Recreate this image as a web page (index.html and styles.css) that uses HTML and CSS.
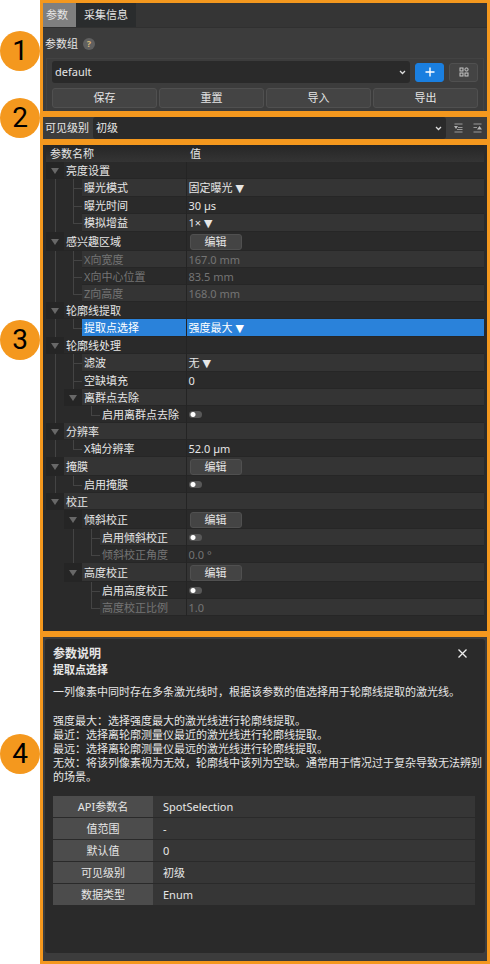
FILE: index.html
```html
<!DOCTYPE html>
<html lang="zh-CN">
<head>
    <meta charset="UTF-8">
    <meta name="viewport" content="width=device-width, initial-scale=1.0">
    <title>参数</title>
    <link rel="stylesheet" href="styles.css">
</head>
<body>
    <section class="frame frame-group">
        <span class="badge">1</span>
        <div class="tabs">
            <button class="tab active">参数</button>
            <button class="tab">采集信息</button>
        </div>
        <div class="group-title">
            <label for="group">参数组</label>
            <span class="help">?</span>
        </div>
        <div class="group-box">
            <div class="group-row">
                <select id="group" class="select">
                    <option>default</option>
                </select>
                <button class="btn icon-btn primary" aria-label="新增">
                    <svg width="10" height="10" viewBox="0 0 10 10"><path d="M5 0.5v9M0.5 5h9" stroke="#fff" stroke-width="1.4"/></svg>
                </button>
                <button class="btn icon-btn" aria-label="管理">
                    <svg width="10" height="10" viewBox="0 0 10 10" fill="none" stroke="#c8c8c8">
                        <rect x="1" y="1" width="3" height="3"/>
                        <rect x="6" y="1" width="3" height="3" rx="1"/>
                        <rect x="1" y="6" width="3" height="3"/>
                        <rect x="6" y="6" width="3" height="3"/>
                    </svg>
                </button>
            </div>
            <div class="group-actions">
                <button class="btn">保存</button>
                <button class="btn">重置</button>
                <button class="btn">导入</button>
                <button class="btn">导出</button>
            </div>
        </div>
    </section>

    <section class="frame frame-level">
        <span class="badge">2</span>
        <div class="level-row">
            <label for="level">可见级别</label>
            <select id="level" class="select">
                <option>初级</option>
            </select>
            <button class="tool-btn" aria-label="全部展开">
                <svg width="9" height="10" viewBox="0 0 9 10"><path d="M0.5 1h8M4 4.5h4.5M3 6.5h5.5M0.5 9h8" stroke="#9a9a9a"/><path d="M0 3h4L2 6z" fill="#b4b4b4"/></svg>
            </button>
            <button class="tool-btn" aria-label="全部折叠">
                <svg width="9" height="10" viewBox="0 0 9 10"><path d="M0.5 1h8M0.5 4.5h3.5M0.5 9h8" stroke="#9a9a9a"/><path d="M4 6.5h5L6.500 3z" fill="#b4b4b4"/></svg>
            </button>
        </div>
    </section>

    <section class="frame frame-tree">
        <span class="badge">3</span>
        <table class="tree">
            <thead>
                <tr><th class="col-name">参数名称</th><th>值</th></tr>
            </thead>
            <tbody>
                <tr>
                    <td><div class="name"><i class="arrow"></i><span>亮度设置</span></div></td>
                    <td></td>
                </tr>
                <tr class="option-row">
                    <td><div class="name"><i class="line"></i><i class="branch"></i><span>曝光模式</span></div></td>
                    <td>固定曝光 <span class="caret">▼</span></td>
                </tr>
                <tr>
                    <td><div class="name"><i class="line"></i><i class="branch"></i><span>曝光时间</span></div></td>
                    <td>30 µs</td>
                </tr>
                <tr class="option-row">
                    <td><div class="name"><i class="line"></i><i class="branch last"></i><span>模拟增益</span></div></td>
                    <td>1× <span class="caret">▼</span></td>
                </tr>
                <tr class="edit-row">
                    <td><div class="name"><i class="arrow"></i><span>感兴趣区域</span></div></td>
                    <td><button class="btn edit">编辑</button></td>
                </tr>
                <tr class="disabled">
                    <td><div class="name"><i class="line"></i><i class="branch"></i><span>X向宽度</span></div></td>
                    <td>167.0 mm</td>
                </tr>
                <tr class="disabled">
                    <td><div class="name"><i class="line"></i><i class="branch"></i><span>X向中心位置</span></div></td>
                    <td>83.5 mm</td>
                </tr>
                <tr class="disabled">
                    <td><div class="name"><i class="line"></i><i class="branch last"></i><span>Z向高度</span></div></td>
                    <td>168.0 mm</td>
                </tr>
                <tr>
                    <td><div class="name"><i class="arrow"></i><span>轮廓线提取</span></div></td>
                    <td></td>
                </tr>
                <tr class="option-row selected">
                    <td><div class="name"><i class="line"></i><i class="branch last"></i><span>提取点选择</span></div></td>
                    <td>强度最大 <span class="caret">▼</span></td>
                </tr>
                <tr>
                    <td><div class="name"><i class="arrow"></i><span>轮廓线处理</span></div></td>
                    <td></td>
                </tr>
                <tr class="option-row">
                    <td><div class="name"><i class="line"></i><i class="branch"></i><span>滤波</span></div></td>
                    <td>无 <span class="caret">▼</span></td>
                </tr>
                <tr>
                    <td><div class="name"><i class="line"></i><i class="branch"></i><span>空缺填充</span></div></td>
                    <td>0</td>
                </tr>
                <tr>
                    <td><div class="name"><i class="line"></i><i class="arrow"></i><span>离群点去除</span></div></td>
                    <td></td>
                </tr>
                <tr>
                    <td><div class="name"><i class="line"></i><i></i><i class="branch last"></i><label for="outlier">启用离群点去除</label></div></td>
                    <td><input type="checkbox" class="toggle" id="outlier"></td>
                </tr>
                <tr>
                    <td><div class="name"><i class="arrow"></i><span>分辨率</span></div></td>
                    <td></td>
                </tr>
                <tr>
                    <td><div class="name"><i class="line"></i><i class="branch last"></i><span>X轴分辨率</span></div></td>
                    <td>52.0 µm</td>
                </tr>
                <tr class="edit-row">
                    <td><div class="name"><i class="arrow"></i><span>掩膜</span></div></td>
                    <td><button class="btn edit">编辑</button></td>
                </tr>
                <tr>
                    <td><div class="name"><i class="line"></i><i class="branch last"></i><label for="mask">启用掩膜</label></div></td>
                    <td><input type="checkbox" class="toggle" id="mask"></td>
                </tr>
                <tr>
                    <td><div class="name"><i class="arrow"></i><span>校正</span></div></td>
                    <td></td>
                </tr>
                <tr class="edit-row">
                    <td><div class="name"><i></i><i class="arrow"></i><span>倾斜校正</span></div></td>
                    <td><button class="btn edit">编辑</button></td>
                </tr>
                <tr>
                    <td><div class="name"><i></i><i class="line"></i><i class="branch"></i><label for="tilt">启用倾斜校正</label></div></td>
                    <td><input type="checkbox" class="toggle" id="tilt"></td>
                </tr>
                <tr class="disabled">
                    <td><div class="name"><i></i><i class="line"></i><i class="branch last"></i><span>倾斜校正角度</span></div></td>
                    <td>0.0 °</td>
                </tr>
                <tr class="edit-row">
                    <td><div class="name"><i></i><i class="arrow"></i><span>高度校正</span></div></td>
                    <td><button class="btn edit">编辑</button></td>
                </tr>
                <tr>
                    <td><div class="name"><i></i><i></i><i class="branch"></i><label for="height">启用高度校正</label></div></td>
                    <td><input type="checkbox" class="toggle" id="height"></td>
                </tr>
                <tr class="disabled">
                    <td><div class="name"><i></i><i></i><i class="branch last"></i><span>高度校正比例</span></div></td>
                    <td>1.0</td>
                </tr>
            </tbody>
        </table>
    </section>

    <section class="frame frame-info">
        <span class="badge">4</span>
        <div class="card">
            <div class="card-head">
                <h2>参数说明</h2>
                <button class="close" aria-label="关闭">
                    <svg width="9" height="9" viewBox="0 0 9 9"><path d="M0.5 0.5l8 8M8.5 0.5l-8 8" stroke="#eee" stroke-width="1.3"/></svg>
                </button>
            </div>
            <h3>提取点选择</h3>
            <p>一列像素中同时存在多条激光线时，根据该参数的值选择用于轮廓线提取的激光线。</p>
            <p>强度最大：选择强度最大的激光线进行轮廓线提取。<br>
            最近：选择离轮廓测量仪最近的激光线进行轮廓线提取。<br>
            最远：选择离轮廓测量仪最远的激光线进行轮廓线提取。<br>
            无效：将该列像素视为无效，轮廓线中该列为空缺。通常用于情况过于复杂导致无法辨别的场景。</p>
            <table class="info">
                <tr><th>API参数名</th><td>SpotSelection</td></tr>
                <tr><th>值范围</th><td>-</td></tr>
                <tr><th>默认值</th><td>0</td></tr>
                <tr><th>可见级别</th><td>初级</td></tr>
                <tr><th>数据类型</th><td>Enum</td></tr>
            </table>
        </div>
    </section>
</body>
</html>
```
FILE: styles.css
```css
* {
    box-sizing: border-box;
}
body {
    margin: 0;
    padding-left: 40px;
    background-color: #fff;
    color: #e6e6e6;
    font-family: "Noto Sans", "Noto Sans CJK SC", sans-serif;
    font-size: 11px;
    line-height: 14px;
}
button, select {
    font: inherit;
    color: inherit;
    margin: 0;
    padding: 0;
    border: none;
    background: none;
}
svg {
    display: block;
}

/* orange frames and their numbers */
.frame {
    position: relative;
    border: 3px solid #f4981e;
    background-color: #3c3c3c;
}
.badge {
    position: absolute;
    left: -43px;
    width: 40px;
    height: 40px;
    border-radius: 50%;
    background-color: #f4981e;
    color: #000;
    font-family: Roboto, sans-serif;
    font-size: 28px;
    line-height: 40px;
    text-align: center;
}
.frame-group .badge {
    top: 28px;
}
.frame-level .badge {
    top: -19px;
}
.frame-tree .badge {
    top: 175px;
}
.frame-info .badge {
    top: 97px;
}

/* parameter group */
.tabs {
    display: flex;
    height: 25px;
    background-color: #353535;
    border-bottom: 1px solid #303030;
}
.tab {
    padding: 0 8px;
    background-color: #2a2c2d;
}
.tab.active {
    padding: 0 8px 0 3px;
    background-color: #7f7f7f;
}
.group-title {
    display: flex;
    align-items: center;
    gap: 5px;
    height: 30px;
    padding: 2px 0 0 2px;
}
.help {
    width: 12px;
    height: 12px;
    border-radius: 50%;
    background-color: #606060;
    color: #d8b878;
    font-size: 9px;
    font-weight: bold;
    line-height: 12px;
    text-align: center;
}
.group-box {
    margin: 0 3px;
    padding: 2px 5px 3px;
    border: 1px solid #434343;
    border-bottom: none;
}
.group-row {
    display: flex;
    align-items: center;
    gap: 5px;
    margin-bottom: 5px;
}
.select {
    flex: 1;
    min-width: 0;
    height: 22px;
    padding-left: 3px;
    border-radius: 3px;
    appearance: none;
    background: #2a2a2a url("data:image/svg+xml,%3Csvg xmlns='http://www.w3.org/2000/svg' width='7' height='5'%3E%3Cpath d='M1 1l2.5 2.5L6 1' fill='none' stroke='%23ddd' stroke-width='1.3'/%3E%3C/svg%3E") no-repeat right 4px center;
}
.btn {
    height: 20px;
    border: 1px solid #505050;
    border-radius: 3px;
    background-color: #444;
}
.icon-btn {
    display: flex;
    align-items: center;
    justify-content: center;
    width: 29px;
    height: 19px;
}
.primary {
    border-color: #1a7fe0;
    background-color: #1a7fe0;
}
.group-actions {
    display: grid;
    grid-template-columns: repeat(4, 1fr);
    gap: 2px;
}

/* visibility level */
.level-row {
    display: flex;
    align-items: center;
    height: 22px;
    padding: 0 5px 0 2px;
}
.level-row .select {
    margin: 0 8px 0 4px;
}
.tool-btn + .tool-btn {
    margin-left: 10px;
}

/* parameter tree */
.frame-tree {
    min-height: 492px;
    padding: 0 3px;
    background-color: #2a2a2a;
}
.tree {
    width: 100%;
    border-collapse: collapse;
    table-layout: fixed;
}
.tree th {
    height: 17px;
    padding: 0 4px;
    background-image: linear-gradient(#262626, #343434);
    font-weight: normal;
    text-align: left;
}
.tree .col-name {
    width: 140px;
}
.tree td {
    height: 17px;
    padding: 0 0 0 2px;
    border-left: 1px solid #242424;
    line-height: 16px;
    box-shadow: inset 0 -1px #262626;
}
.tree td:first-child {
    padding: 0;
    border-left: none;
}
.tree .option-row td {
    height: 18px;
}
.tree .edit-row td {
    height: 19px;
}
.tree tbody tr:nth-child(even) td {
    background-color: #343434;
}
.name {
    display: flex;
    height: 17px;
}
.option-row .name {
    height: 18px;
}
.edit-row .name {
    height: 19px;
}
.name span, .name label {
    align-self: center;
    padding-left: 2px;
}
.name i {
    position: relative;
    flex: none;
    width: 18px;
    background-color: #2a2a2a;
}
.name .arrow {
    display: flex;
    align-items: center;
    justify-content: center;
    background-color: #252525;
}
.arrow::before {
    content: "";
    border: 4px solid transparent;
    border-top: 6px solid #686868;
    border-bottom: none;
}
.line::before, .branch::before {
    content: "";
    position: absolute;
    top: 0;
    bottom: 0;
    left: 9px;
    border-left: 1px solid #444;
}
.branch.last::before {
    bottom: 50%;
}
.branch::after {
    content: "";
    position: absolute;
    top: 50%;
    left: 9px;
    right: 0;
    border-top: 1px solid #444;
}
.caret {
    font-family: "DejaVu Sans", sans-serif;
    line-height: 1;
}
.disabled {
    color: #747474;
}
.tree tbody tr.selected td {
    background-color: #2a82da;
    color: #fff;
}
.edit {
    display: block;
    width: 52px;
    height: 16px;
    margin-left: 1px;
    line-height: 14px;
}
.toggle {
    display: block;
    appearance: none;
    width: 13px;
    height: 7px;
    margin: 0;
    border-radius: 4px;
    background: radial-gradient(circle at 4px 50%, #fff 2px, #585858 3px);
}

/* parameter description */
.frame-info {
    padding: 2px 2px 8px;
}
.card {
    min-height: 314px;
    padding: 6px 10px 6px 8px;
    border-radius: 3px;
    background-color: #2a2a2a;
}
.card-head {
    display: flex;
    align-items: center;
    justify-content: space-between;
}
.card h2 {
    margin: 0;
    font-size: 12px;
    line-height: 17px;
}
.card h3 {
    margin: 0 0 7px;
    font-size: 11px;
    line-height: 16px;
}
.close {
    margin-right: 8px;
}
.card p {
    margin: 0 -10px 15px 0;
}
.card p + p {
    margin-bottom: 11px;
}
.info {
    width: 100%;
    border-spacing: 0 1px;
}
.info th {
    width: 100px;
    height: 21px;
    padding: 0;
    background-color: #4c4c4c;
    font-weight: normal;
}
.info td {
    padding: 0 10px;
    background-color: #363636;
}
```
